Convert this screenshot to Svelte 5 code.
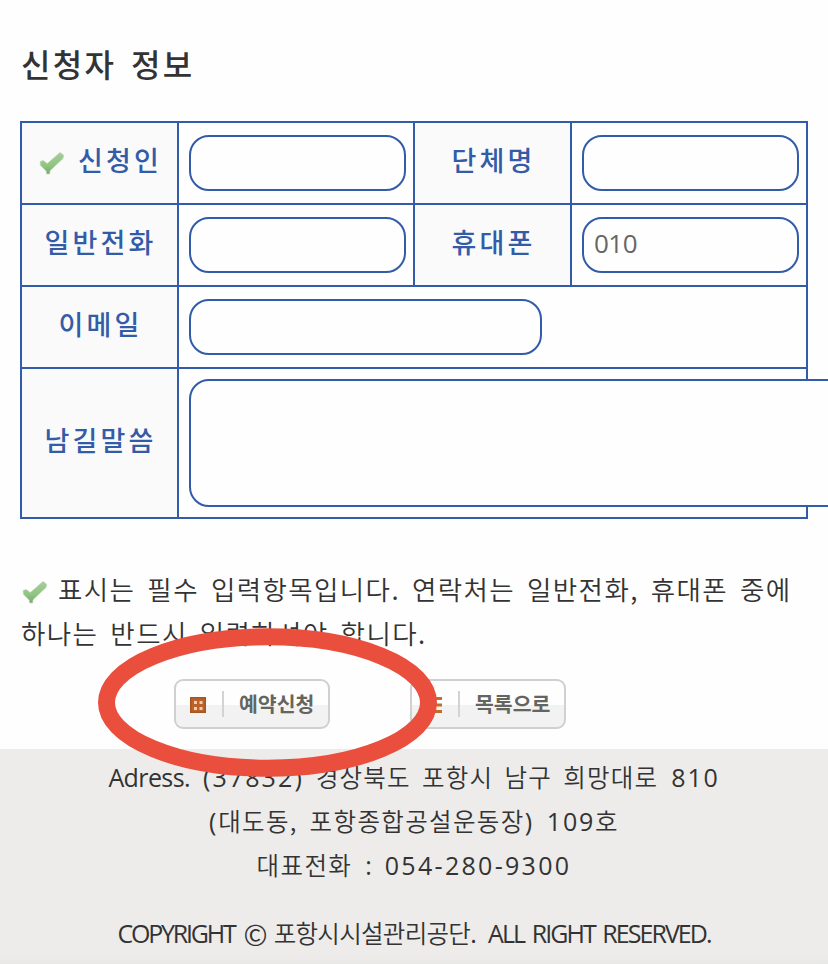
<script>
  let phone = $state('010');
</script>

{#snippet check()}
  <svg class="check" viewBox="0 0 26 24" width="26" height="24" aria-hidden="true">
    <defs>
      <linearGradient id="leaf" x1="0" y1="0" x2="0" y2="1">
        <stop offset="0" stop-color="#a9cb9e" />
        <stop offset="0.6" stop-color="#8fc680" />
        <stop offset="1" stop-color="#7da574" />
      </linearGradient>
    </defs>
    <path d="M1.2 10.5 L4.2 9.6 L8.3 12.6 L21 1.5 L24.7 4.2 L24 7.5 L11 19.7 L10.7 22.9 L7.6 22.9 L7.2 20 L1.4 14.2 Z" fill="url(#leaf)" stroke="#b9d5b1" stroke-width=".7" stroke-linejoin="round" />
  </svg>
{/snippet}

<div class="page">
  <h1>신청자 정보</h1>

  <form class="grid">
    <div class="label required">{@render check()}<span>신청인</span></div>
    <div class="field"><input aria-label="신청인" /></div>
    <div class="label">단체명</div>
    <div class="field"><input aria-label="단체명" /></div>
    <div class="label">일반전화</div>
    <div class="field"><input aria-label="일반전화" /></div>
    <div class="label">휴대폰</div>
    <div class="field"><input aria-label="휴대폰" bind:value={phone} /></div>
    <div class="label">이메일</div>
    <div class="field wide"><input class="email" aria-label="이메일" /></div>
    <div class="label memo">남길말씀</div>
    <div class="field wide"><textarea aria-label="남길말씀"></textarea></div>
  </form>

  <div class="note">
    <div class="line">{@render check()}<span class="first">표시는 필수 입력항목입니다. 연락처는 일반전화, 휴대폰 중에</span></div>
    <div class="line">하나는 반드시 입력하셔야 합니다.</div>
  </div>

  <div class="actions">
    <button>
      <svg viewBox="0 0 16 16" width="16" height="16" aria-hidden="true">
        <rect width="16" height="16" fill="#b9622c" />
        <rect x=".7" y=".7" width="14.6" height="14.6" fill="none" stroke="#a9531f" stroke-width="1.4" />
        <path d="M4 4h3v3H4zM9.5 4h3v3h-3zM4 10h3v3H4zM9.5 10h3v3h-3z" fill="#f1cdb0" />
      </svg>
      <i></i><span>예약신청</span>
    </button>
    <button>
      <svg viewBox="0 0 16 16" width="16" height="16" aria-hidden="true">
        <path d="M0 0h3v3H0zM5 0h11v3H5zM0 6.5h3v3H0zM5 6.5h11v3H5zM0 13h3v3H0zM5 13h11v3H5z" fill="#c56c2c" />
      </svg>
      <i></i><span>목록으로</span>
    </button>
    <svg class="ring" viewBox="0 0 340 150" width="340" height="150" aria-hidden="true">
      <ellipse cx="169.5" cy="75.5" rx="161" ry="65.7" fill="none" stroke="#ea4e3d" stroke-width="17" />
    </svg>
  </div>

  <footer>
    <div class="line"><span class="latin">Adress.</span><span class="zip">(37832)</span><span class="addr street">경상북도 포항시 남구 희망대로</span><span class="num n810">810</span></div>
    <div class="line"><span class="num">(</span><span class="addr">대도동, 포항종합공설운동장</span><span class="num">)</span><span class="num n109">109</span><span class="addr">호</span></div>
    <div class="line"><span class="addr">대표전화</span><span class="colon">:</span><span class="num tel">054-280-9300</span></div>
    <div class="line copy"><span class="c1">COPYRIGHT</span><span class="c2">©</span><span class="c3">포항시시설관리공단.</span><span class="c4">ALL RIGHT RESERVED.</span></div>
  </footer>
</div>

<style>
  .page {
    width: 828px;
    height: 964px;
    overflow: hidden;
    background: #fefefe;
    color: #333;
    font-family: 'Noto Sans CJK KR', sans-serif;
    display: flex;
    flex-direction: column;
  }
  h1 {
    margin: 0;
    padding: 41px 0 0 21px;
    height: 121px;
    box-sizing: border-box;
    font-size: 32px;
    line-height: 44px;
    font-weight: 500;
    letter-spacing: 2.3px;
    word-spacing: 5.3px;
  }
  .grid {
    flex: none;
    margin-left: 20px;
    box-sizing: border-box;
    width: 788px;
    height: 398px;
    padding: 2px;
    display: grid;
    grid-template-columns: 155px 234px 155px 234px;
    grid-template-rows: 80px 80px 80px 148px;
    gap: 2px;
    background: #335ca8;
  }
  .label {
    display: flex;
    align-items: center;
    justify-content: center;
    padding: 0 0 7px 2px;
    background: #fafafa;
    color: #335ca8;
    font-size: 27px;
    font-weight: 500;
    letter-spacing: 3.1px;
    line-height: 40px;
  }
  .label.required span { margin-left: 13px; }
  .required .check { position: relative; top: 3px; }
  .field {
    display: flex;
    align-items: center;
    padding-left: 10px;
    background: #fefefe;
    min-width: 0;
  }
  .wide { grid-column: span 3; }
  input, textarea {
    box-sizing: border-box;
    width: 217px;
    height: 56px;
    margin: 0;
    padding: 0 11px 4px 10px;
    border: 2px solid #335ca8;
    border-radius: 20px;
    background: #fefefe;
    color: #666;
    font: 26px 'Open Sans', sans-serif;
    letter-spacing: -0.5px;
    outline: none;
    flex: none;
    resize: none;
  }
  input.email { width: 353px; }
  textarea { width: 800px; height: 128px; position: relative; }
  .note {
    flex: none;
    height: 160px;
    box-sizing: border-box;
    padding: 48px 0 0 21px;
    font-size: 26.5px;
    letter-spacing: 1.4px;
    word-spacing: 4.7px;
    font-weight: 350;
  }
  .line { display: flex; height: 44px; line-height: 44px; white-space: pre; align-items: center; }
  .note .check { margin: 6px 10px 0 1px; flex: none; }
  .actions {
    position: relative;
    z-index: 1;
    flex: none;
    display: flex;
    gap: 80px;
    padding-left: 174px;
    height: 70px;
  }
  button {
    display: flex;
    align-items: center;
    box-sizing: border-box;
    width: 156px;
    height: 50px;
    padding: 1px 0 0 14px;
    border: 2px solid #d0d0ce;
    border-radius: 9px;
    background: linear-gradient(#fefefe 0 52%, #f2f2f2 52% 100%);
    color: #65655f;
    font: 700 20.5px 'Noto Sans CJK KR', sans-serif;
  }
  button i { width: 2px; height: 26px; background: #d3d3d3; margin: 0 15px 0 16px; position: relative; top: -1px; }
  button span { line-height: 24px; position: relative; top: -2px; white-space: nowrap; }
  .ring { position: absolute; left: 98px; top: -52px; }
  footer {
    flex: 1;
    padding-top: 6px;
    background: linear-gradient(#edecea 0 206px, #e8e8e6 100%);
    font-weight: 350;
    font-size: 24.5px;
  }
  footer .line { justify-content: center; }
  .addr { letter-spacing: 1.35px; word-spacing: 5px; }
  .addr.street { letter-spacing: 1.2px; word-spacing: 4.6px; }
  .latin, .zip, .num, .colon, .c1, .c4 { font-family: 'Open Sans', sans-serif; font-weight: 400; font-size: 25px; }
  .num, .zip { letter-spacing: 1.8px; }
  .latin { letter-spacing: -0.6px; }
  .tel { letter-spacing: 2.3px; }
  .zip { margin: 0 12px 0 13px; letter-spacing: 2.1px; }
  .n810, .n109 { margin-left: 13px; }
  .colon { margin: 0 13px; }
  .copy { margin-top: 24px; }
  .c1 { letter-spacing: -2.2px; }
  .c4 { letter-spacing: -1.95px; word-spacing: 3px; margin-left: 12px; }
  .c2 { font-size: 29px; margin: 0 6px 0 9px; }
  .c3 { letter-spacing: -0.7px; }
</style>
